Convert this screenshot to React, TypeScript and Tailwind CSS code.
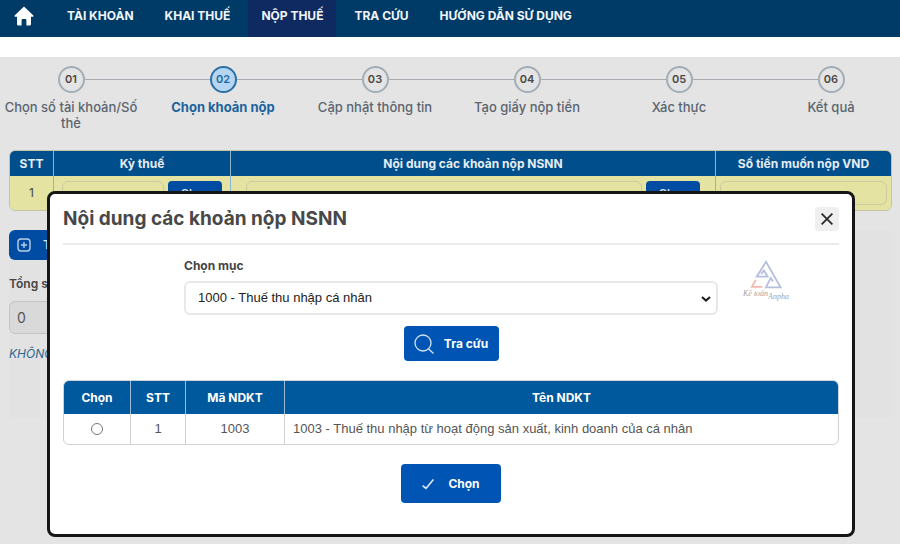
import clsx from "clsx";

const NAV_ITEMS = [
  { label: "TÀI KHOẢN" },
  { label: "KHAI THUẾ" },
  { label: "NỘP THUẾ", active: true },
  { label: "TRA CỨU" },
  { label: "HƯỚNG DẪN SỬ DỤNG" },
];

const STEPS = [
  "Chọn số tài khoản/Số thẻ",
  "Chọn khoản nộp",
  "Cập nhật thông tin",
  "Tạo giấy nộp tiền",
  "Xác thực",
  "Kết quả",
];

const CURRENT_STEP = 1;

function NavBar() {
  return (
    <nav className="flex h-[37px] items-stretch bg-[#003a66] text-xs font-bold text-[#f1f5f9]">
      <a
        href="#"
        aria-label="Trang chủ"
        className="mr-5 ml-[14px] flex w-5 items-start pt-[6px]"
      >
        <svg viewBox="0 0 20 20" className="size-5" fill="#fff">
          <path d="M10 0.6 0.6 9.6Q0.2 10.8 1.4 10.8H3V18.2Q3 19.6 4.4 19.6H7.6V14.4Q7.6 13 8.8 13H11.2Q12.4 13 12.4 14.4V19.6H15.6Q17 19.6 17 18.2V10.8H18.6Q19.8 10.8 19.4 9.6Z" />
        </svg>
      </a>
      <div className="flex gap-[5px]">
        {NAV_ITEMS.map((item) => (
          <a
            key={item.label}
            href="#"
            className={clsx(
              "flex items-center px-[13px] pb-[6px] whitespace-nowrap",
              item.active && "bg-[#0f2a60]",
            )}
          >
            {item.label}
          </a>
        ))}
      </div>
    </nav>
  );
}

function Stepper() {
  return (
    <ol className="-mr-[7px] -ml-[5px] grid grid-cols-6">
      {STEPS.map((step, index) => {
        const active = index === CURRENT_STEP;

        return (
          <li key={step} className="flex flex-col items-center">
            <div className="flex w-full items-center">
              <span
                className={clsx("h-px flex-1", index > 0 && "bg-[#a5abb0]")}
              />
              <span
                className={clsx(
                  "flex size-[27px] items-center justify-center rounded-full border-2 text-[11px] font-semibold",
                  active
                    ? "border-[#2b6fa3] bg-[#b5d6f3] text-[#2468a0]"
                    : "border-[#a3adb6] text-[#4b4744]",
                )}
              >
                0{index + 1}
              </span>
              <span
                className={clsx(
                  "h-px flex-1",
                  index < STEPS.length - 1 && "bg-[#a5abb0]",
                )}
              />
            </div>
            <span
              className={clsx(
                "mt-[6px] px-1 text-center text-[13px] leading-4",
                active
                  ? "font-bold text-[#1c639c]"
                  : "font-medium text-[#5b6570]",
              )}
            >
              {step}
            </span>
          </li>
        );
      })}
    </ol>
  );
}

function PickButton() {
  return (
    <button
      type="button"
      className="h-[24px] w-[54px] shrink-0 rounded-sm bg-[#004ca3] text-[11px] font-semibold text-[#d9e4f0]"
    >
      Chọn
    </button>
  );
}

function PaymentTable() {
  const head = "h-[25px] border-r border-[#8db4cf] last:border-r-0";
  const cell = "h-[34px] border-r border-[#8db4cf] last:border-r-0";
  const field =
    "h-[24px] w-full min-w-0 rounded-md border border-[#cccba0] bg-transparent px-2 text-xs";

  return (
    <div className="mr-2 ml-[9px] overflow-hidden rounded-md border border-[#c3c4a4]">
      <table className="w-full table-fixed border-separate border-spacing-0">
        <colgroup>
          <col className="w-[44px]" />
          <col className="w-[177px]" />
          <col />
          <col className="w-[175px]" />
        </colgroup>
        <thead className="bg-[#004e8c] text-xs font-bold text-[#e4edf5]">
          <tr>
            <th className={head}>STT</th>
            <th className={head}>Kỳ thuế</th>
            <th className={head}>Nội dung các khoản nộp NSNN</th>
            <th className={head}>Số tiền muốn nộp VND</th>
          </tr>
        </thead>
        <tbody className="bg-[#e4e3a1] text-xs text-[#4a4a3c]">
          <tr>
            <td className={clsx(cell, "text-center")}>1</td>
            <td className={clsx(cell, "px-2")}>
              <div className="flex gap-1">
                <input aria-label="Kỳ thuế" className={field} />
                <PickButton />
              </div>
            </td>
            <td className={clsx(cell, "px-[15px]")}>
              <div className="flex gap-1">
                <input aria-label="Nội dung" className={field} />
                <PickButton />
              </div>
            </td>
            <td className={clsx(cell, "px-1")}>
              <input aria-label="Số tiền" className={field} />
            </td>
          </tr>
        </tbody>
      </table>
    </div>
  );
}

function PaymentSummary() {
  return (
    <div className="mr-2 ml-[9px] mt-[19px] flex h-[188px] flex-col items-start bg-[#e2e2e2]">
      <button
        type="button"
        className="flex h-[30px] items-center gap-3 rounded-md bg-[#004ca3] px-2 text-xs font-semibold text-[#d9e4f0]"
      >
        <svg
          viewBox="0 0 14 14"
          className="size-[14px]"
          fill="none"
          stroke="#b9cfe8"
          strokeWidth="1.4"
        >
          <rect x="1" y="1" width="12" height="12" rx="3" />
          <path d="M7 4v6M4 7h6" />
        </svg>
        Thêm dòng
      </button>
      <label
        htmlFor="total"
        className="mt-4 text-xs leading-4 font-semibold text-[#454545]"
      >
        Tổng số tiền
      </label>
      <input
        id="total"
        readOnly
        value="0"
        className="mt-[9px] h-[33px] w-[176px] rounded-md border border-[#c4c4c4] bg-[#d9d9d9] px-[7px] text-sm text-[#555]"
      />
      <p className="mt-3 text-xs leading-4 text-[#2a6690] italic">
        KHÔNG ĐỒNG
      </p>
    </div>
  );
}

function Watermark() {
  return (
    <div className="pointer-events-none absolute top-[66px] right-[60px] flex w-[52px] flex-col items-center">
      <svg viewBox="0 0 32 29" className="h-[29px] w-8" fill="none" strokeWidth="1.8">
        <path
          d="M11 14 14 10.5 17.7 16.7H6.7L16 1.8 30.5 27.3H15.9L20.7 18 23 21.6"
          stroke="#b7bfdf"
        />
        <path d="M5.7 20 1.9 26.9H12.3" stroke="#f3b9aa" />
      </svg>
      <span className="flex font-['Liberation_Serif',serif] text-[8px] leading-[9px] whitespace-nowrap text-[#a3a3a3] italic">
        <span>Kế toán</span>
        <span className="pt-[3px]">Anpha</span>
      </span>
    </div>
  );
}

function ResultTable() {
  const head = "h-[33px] border-r border-[#9cbdd8] last:border-r-0";
  const cell = "h-[30px] border-r border-[#d0d0d0] last:border-r-0";

  return (
    <div className="mt-[19px] overflow-hidden rounded-md border border-[#cfd3d6]">
      <table className="w-full table-fixed border-separate border-spacing-0">
        <colgroup>
          <col className="w-[67px]" />
          <col className="w-[55px]" />
          <col className="w-[99px]" />
          <col />
        </colgroup>
        <thead className="bg-[#00589d] text-xs font-bold text-white">
          <tr>
            <th className={head}>Chọn</th>
            <th className={head}>STT</th>
            <th className={head}>Mã NDKT</th>
            <th className={head}>Tên NDKT</th>
          </tr>
        </thead>
        <tbody className="text-center font-['Liberation_Sans',sans-serif] text-[13px] text-[#555]">
          <tr>
            <td className={cell}>
              <input
                type="radio"
                name="ndkt"
                aria-label="1003"
                className="mx-auto block size-3 appearance-none rounded-full border border-[#777] bg-white"
              />
            </td>
            <td className={cell}>1</td>
            <td className={cell}>1003</td>
            <td className={clsx(cell, "px-2 text-left")}>
              1003 - Thuế thu nhập từ hoạt động sản xuất, kinh doanh của cá nhân
            </td>
          </tr>
        </tbody>
      </table>
    </div>
  );
}

function SearchDialog() {
  return (
    <section
      role="dialog"
      aria-labelledby="dialog-title"
      className="absolute top-[191px] right-[45px] left-[47px] rounded-lg border-3 border-[#161616] bg-white px-[13px] pt-[13px] pb-[31px]"
    >
      <header className="flex items-center justify-between border-b-2 border-[#ebebeb] pb-3">
        <h2
          id="dialog-title"
          className="text-[19px] leading-6 font-bold text-[#484848]"
        >
          Nội dung các khoản nộp NSNN
        </h2>
        <button
          type="button"
          aria-label="Đóng"
          className="flex size-6 items-center justify-center rounded-sm bg-[#efefef]"
        >
          <svg
            viewBox="0 0 12 12"
            className="size-3"
            stroke="#2b2b2b"
            strokeWidth="1.8"
          >
            <path d="M0.6 0.6 11.4 11.4M11.4 0.6 0.6 11.4" />
          </svg>
        </button>
      </header>

      <Watermark />

      <div className="mx-[121px] mt-[13px] flex flex-col">
        <label
          htmlFor="muc"
          className="text-xs leading-4 font-bold text-[#444]"
        >
          Chọn mục
        </label>
        <div className="relative mt-[7px]">
          <select
            id="muc"
            className="h-[34px] w-full appearance-none rounded-md border-2 border-[#e8e8e8] bg-white px-3 font-['Liberation_Sans',sans-serif] text-[13px] text-[#222]"
          >
            <option>1000 - Thuế thu nhập cá nhân</option>
          </select>
          <svg
            viewBox="0 0 10 6"
            className="pointer-events-none absolute top-[15px] right-[7px] h-[6px] w-[10px]"
            fill="none"
            stroke="#1c1c1c"
            strokeWidth="2"
          >
            <path d="M1 1 5 4.6 9 1" />
          </svg>
        </div>
      </div>

      <button
        type="button"
        className="mx-auto mt-[11px] flex h-[35px] w-[95px] items-center justify-center gap-[10px] rounded-sm bg-[#0055b4] text-xs font-bold text-white"
      >
        <svg
          viewBox="0 0 20 20"
          className="size-5"
          fill="none"
          stroke="#d5e4f5"
          strokeWidth="1.3"
        >
          <circle cx="9" cy="9" r="8" />
          <path d="M14.2 14.6 19.5 19.5" />
        </svg>
        Tra cứu
      </button>

      <ResultTable />

      <button
        type="button"
        className="mx-auto mt-[19px] flex h-[39px] w-[100px] items-center justify-center gap-[14px] rounded-sm bg-[#0055b4] text-xs font-bold text-white"
      >
        <svg
          viewBox="0 0 12 12"
          className="size-3"
          fill="none"
          stroke="#e3eefb"
          strokeWidth="1.6"
        >
          <path d="M0.6 7.6 4 10.4 11.4 1.4" />
        </svg>
        Chọn
      </button>
    </section>
  );
}

export default function App() {
  return (
    <div className="relative overflow-hidden bg-white pb-1 font-['Inter','Liberation_Sans',sans-serif]">
      <NavBar />
      <main className="mt-5 min-h-[487px] bg-[#e4e4e4] pt-[9px]">
        <div className="h-[84px]">
          <Stepper />
        </div>
        <PaymentTable />
        <PaymentSummary />
      </main>
      <SearchDialog />
    </div>
  );
}
